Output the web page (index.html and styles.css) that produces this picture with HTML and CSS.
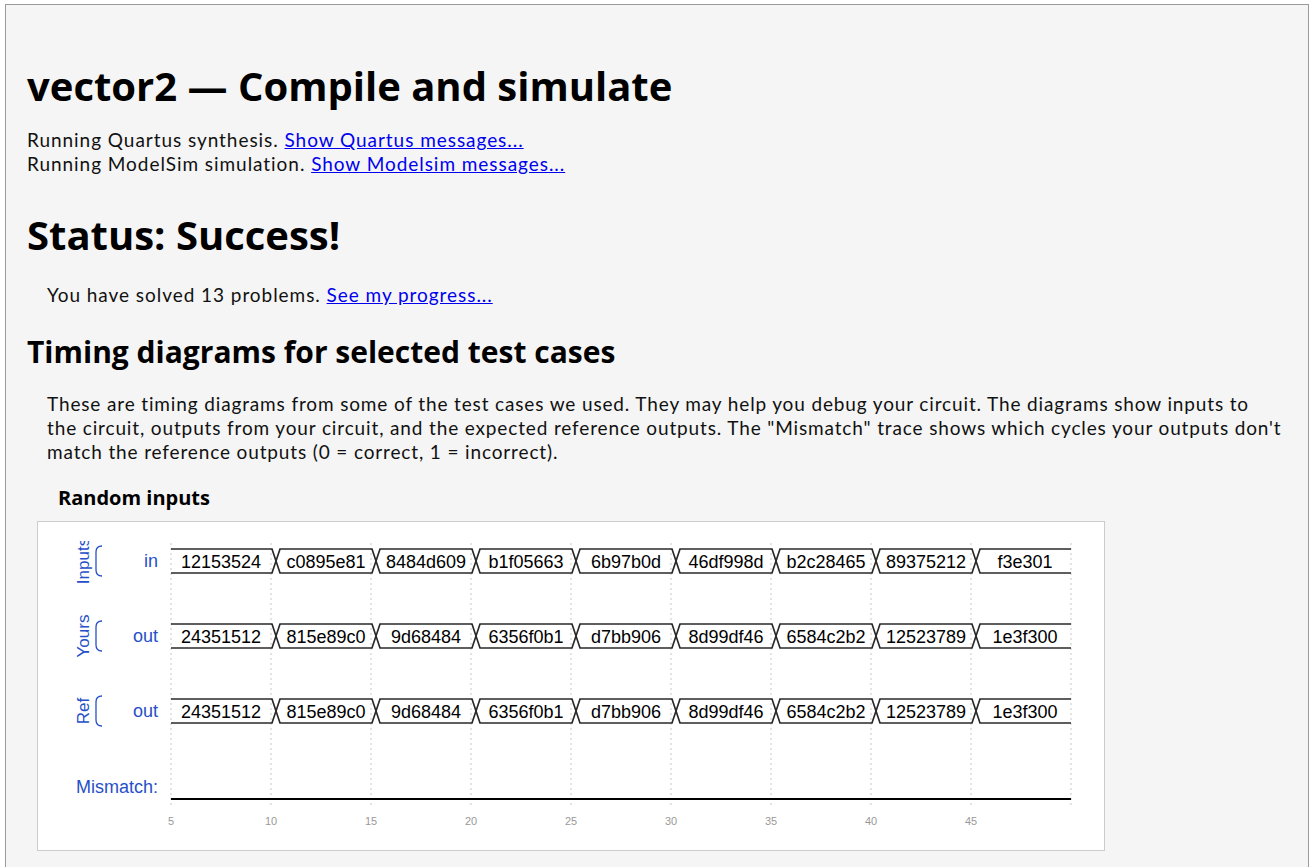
FILE: index.html
```html
<!DOCTYPE html>
<html>
<head>
<meta charset="utf-8">
<title>vector2 — Compile and simulate</title>
<link rel="stylesheet" href="styles.css">
</head>
<body>
<div class="page">
  <h1 class="title">vector2 — Compile and simulate</h1>
  <p class="log">Running Quartus synthesis. <a href="#">Show Quartus messages...</a><br>Running ModelSim simulation. <a href="#">Show Modelsim messages...</a></p>

  <h1 class="status">Status: Success!</h1>
  <p class="indent">You have solved 13 problems. <a href="#">See my progress...</a></p>

  <h2 class="section">Timing diagrams for selected test cases</h2>
  <p class="indent desc">These are timing diagrams from some of the test cases we used. They may help you debug your circuit. The diagrams show inputs to<br>the circuit, outputs from your circuit, and the expected reference outputs. The "Mismatch" trace shows which cycles your outputs don't<br>match the reference outputs (0 = correct, 1 = incorrect).</p>

  <h3 class="case">Random inputs</h3>
  <div class="diagram">
    <svg class="wave" width="1066" height="328" viewBox="38 522 1066 328" xmlns="http://www.w3.org/2000/svg">
      <defs>
        <clipPath id="clipTop"><rect x="38" y="541" width="200" height="300"/></clipPath>
      </defs>
      <g class="grid">
        <line x1="171" y1="543" x2="171" y2="805"/>
        <line x1="271" y1="543" x2="271" y2="805"/>
        <line x1="371" y1="543" x2="371" y2="805"/>
        <line x1="471" y1="543" x2="471" y2="805"/>
        <line x1="571" y1="543" x2="571" y2="805"/>
        <line x1="671" y1="543" x2="671" y2="805"/>
        <line x1="771" y1="543" x2="771" y2="805"/>
        <line x1="871" y1="543" x2="871" y2="805"/>
        <line x1="971" y1="543" x2="971" y2="805"/>
        <line x1="1071" y1="543" x2="1071" y2="805"/>
      </g>

      <g class="group-label">
        <g clip-path="url(#clipTop)">
          <text transform="translate(89,561) rotate(-90)">Inputs</text>
        </g>
        <text transform="translate(89,636) rotate(-90)">Yours</text>
        <text transform="translate(89,711) rotate(-90)">Ref</text>
      </g>
      <g class="bracket">
        <path d="M102,546 Q96,546 96,552 V570 Q96,576 102,576"/>
        <path d="M102,621 Q96,621 96,627 V645 Q96,651 102,651"/>
        <path d="M102,696 Q96,696 96,702 V720 Q96,726 102,726"/>
      </g>
      <g class="sig-label">
        <text x="158" y="567">in</text>
        <text x="158" y="642">out</text>
        <text x="158" y="717">out</text>
        <text x="158" y="793">Mismatch:</text>
      </g>

      <g class="bus">
        <path d="M171,549 H272 L280,573 H372 L380,549 H472 L480,573 H572 L580,549 H672 L680,573 H772 L780,549 H872 L880,573 H972 L980,549 H1071"/>
        <path d="M171,573 H272 L280,549 H372 L380,573 H472 L480,549 H572 L580,573 H672 L680,549 H772 L780,573 H872 L880,549 H972 L980,573 H1071"/>
        <path d="M171,624 H272 L280,648 H372 L380,624 H472 L480,648 H572 L580,624 H672 L680,648 H772 L780,624 H872 L880,648 H972 L980,624 H1071"/>
        <path d="M171,648 H272 L280,624 H372 L380,648 H472 L480,624 H572 L580,648 H672 L680,624 H772 L780,648 H872 L880,624 H972 L980,648 H1071"/>
        <path d="M171,699 H272 L280,723 H372 L380,699 H472 L480,723 H572 L580,699 H672 L680,723 H772 L780,699 H872 L880,723 H972 L980,699 H1071"/>
        <path d="M171,723 H272 L280,699 H372 L380,723 H472 L480,699 H572 L580,723 H672 L680,699 H772 L780,723 H872 L880,699 H972 L980,723 H1071"/>
      </g>

      <g class="val">
        <text x="221" y="567.5">12153524</text>
        <text x="326" y="567.5">c0895e81</text>
        <text x="426" y="567.5">8484d609</text>
        <text x="526" y="567.5">b1f05663</text>
        <text x="626" y="567.5">6b97b0d</text>
        <text x="726" y="567.5">46df998d</text>
        <text x="826" y="567.5">b2c28465</text>
        <text x="926" y="567.5">89375212</text>
        <text x="1025" y="567.5">f3e301</text>

        <text x="221" y="642.5">24351512</text>
        <text x="326" y="642.5">815e89c0</text>
        <text x="426" y="642.5">9d68484</text>
        <text x="526" y="642.5">6356f0b1</text>
        <text x="626" y="642.5">d7bb906</text>
        <text x="726" y="642.5">8d99df46</text>
        <text x="826" y="642.5">6584c2b2</text>
        <text x="926" y="642.5">12523789</text>
        <text x="1025" y="642.5">1e3f300</text>

        <text x="221" y="717.5">24351512</text>
        <text x="326" y="717.5">815e89c0</text>
        <text x="426" y="717.5">9d68484</text>
        <text x="526" y="717.5">6356f0b1</text>
        <text x="626" y="717.5">d7bb906</text>
        <text x="726" y="717.5">8d99df46</text>
        <text x="826" y="717.5">6584c2b2</text>
        <text x="926" y="717.5">12523789</text>
        <text x="1025" y="717.5">1e3f300</text>
      </g>

      <line class="mismatch" x1="171" y1="799" x2="1071" y2="799"/>

      <g class="tick">
        <text x="171" y="825">5</text>
        <text x="271" y="825">10</text>
        <text x="371" y="825">15</text>
        <text x="471" y="825">20</text>
        <text x="571" y="825">25</text>
        <text x="671" y="825">30</text>
        <text x="771" y="825">35</text>
        <text x="871" y="825">40</text>
        <text x="971" y="825">45</text>
      </g>
    </svg>
  </div>
</div>
</body>
</html>
```

FILE: styles.css
```css
html, body {
  background: #ffffff;
}
body {
  margin: 4px 6px 0 5px;
  font-family: Lato, "Open Sans", "Liberation Sans", sans-serif;
  font-size: 19px;
  letter-spacing: 0.95px;
  line-height: 24px;
  color: #111;
}
.page {
  border: 1px solid #9a9a9a;
  border-bottom: none;
  background: #f5f5f5;
  padding: 0 21px 20px 21px;
  min-height: 860px;
  box-sizing: border-box;
}
h1, h2, h3 {
  font-family: "Open Sans", "Liberation Sans", sans-serif;
  font-weight: 700;
  letter-spacing: 0;
  color: #000;
}
.title {
  font-size: 40px;
  line-height: 48px;
  margin: 57px 0 0 0;
}
.log {
  margin: 18px 0 0 0;
}
.status {
  font-size: 40px;
  line-height: 48px;
  margin: 35px 0 0 0;
}
.indent {
  margin: 24px 0 0 20px;
}
.section {
  font-size: 30px;
  line-height: 36px;
  margin: 27px 0 0 0;
}
.desc {
  margin-top: 22px;
  white-space: nowrap;
  letter-spacing: 0.86px;
}
.case {
  font-size: 20px;
  line-height: 24px;
  margin: 22px 0 0 31px;
}
a {
  color: #0000ee;
  text-decoration: underline;
}
.diagram {
  margin: 11px 0 0 10px;
  width: 1066px;
  border: 1px solid #cccccc;
  background: #ffffff;
}
.wave {
  display: block;
  font-family: "Liberation Sans", Arial, sans-serif;
  letter-spacing: 0;
}
.grid line {
  stroke: #c8c8c8;
  stroke-width: 1;
  stroke-dasharray: 2 3;
}
.group-label text {
  font-size: 17px;
  fill: #2650c8;
  text-anchor: middle;
}
.bracket path {
  fill: none;
  stroke: #2650c8;
  stroke-width: 1.3;
}
.sig-label text {
  font-size: 18px;
  fill: #2650c8;
  text-anchor: end;
}
.bus path {
  fill: none;
  stroke: #2a2a2a;
  stroke-width: 1.7;
}
.val text {
  font-size: 18px;
  fill: #000;
  text-anchor: middle;
}
.mismatch {
  stroke: #000;
  stroke-width: 2;
}
.tick text {
  font-size: 11px;
  fill: #999999;
  text-anchor: middle;
}
```
